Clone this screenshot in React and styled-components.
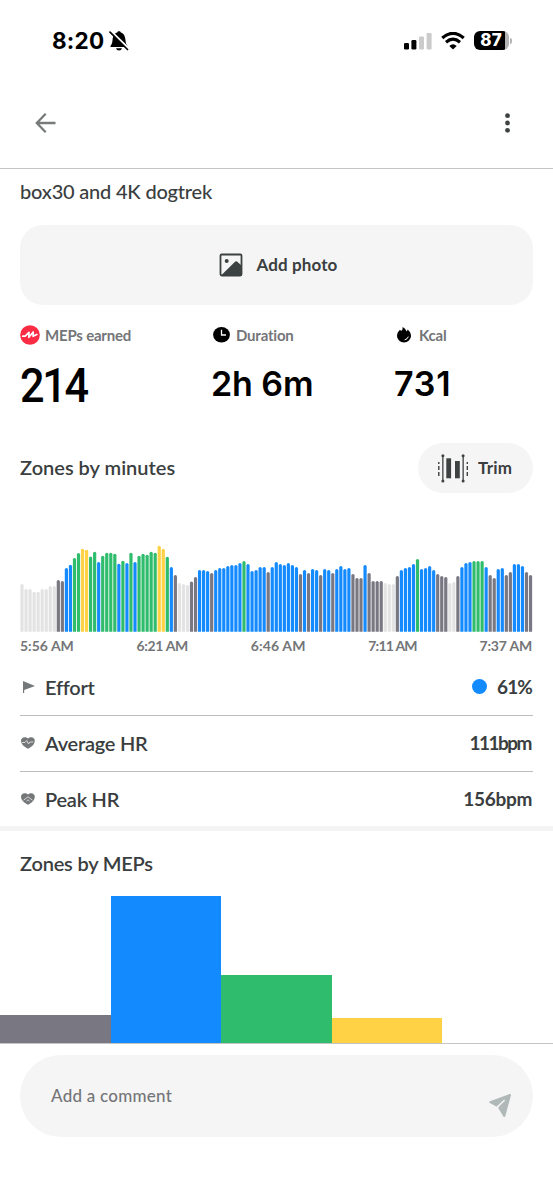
import styled, { createGlobalStyle } from 'styled-components';

const GlobalStyle = createGlobalStyle`
    * {
        box-sizing: border-box;
    }

    body {
        margin: 0;
        background: #fff;
        font-family: Lato, "Liberation Sans", sans-serif;
        color: #3a3e40;
    }
`;

const zoneColor = (z) => {
    switch(z) {
        case "e": return "#e3e3e3";
        case "g": return "#787782";
        case "b": return "#148aff";
        case "n": return "#2fbc6c";
        default: return "#ffd145";
    }
}

// one entry per minute: zone letter + bar height
const minutes = `e47.3 e42.3 e42.3 e39.7 e39.7 e42.3 e42.3 e45.3 e45.3 g51.3 g50.3 b63.3 b66.7 n73.3 n78.3 y82.7 y81.7 n75 n79.7 b69.3
n75.7 n78.7 n78.7 n77.7 b67.7 n70.7 b68.3 n78.7 b69.3 n75.7 n77.7 n76.7 n79.7 n78.7 y85.7 y82.7 n74.7 b64.3 g56.3 e48.3 e47.3 e46.3
g50 g54.3 b61.3 b61.3 b60.3 g58.3 b61.3 b63.3 b63.3 b65.3 b66.3 b66.3 b68.3 n70.3 b67.3 b60.3 b61.3 b64.3 b64.3 g59.3 b64.3 b69.3
b67.3 b66.3 b68.3 b66.3 b64.3 g57.3 b61.3 g58.3 b62.3 b61.3 g56.3 b62.3 b61.3 g58.3 b62.3 b65.3 b62.3 b63.3 g57.3 g53.3 g53.3 b66.3
g58.3 g50.3 g50.3 g50.3 e48.3 e47.3 e47.3 g55.3 b61.3 b63.3 b64.3 b67.3 n72.3 b62.3 b63.3 b65.3 b61.3 g57.3 g55.3 g54.3 e48.3 e49.3
g55.3 b64.3 b68.3 b69.3 n70.3 n70.3 n70.3 b64.3 g56.3 g53.3 b62.3 b63.3 g56.3 g59.3 b67.3 b67.3 b65.3 g59.3 g56.3`
    .split(/\s+/)
    .map(m => ({ zone: m[0], height: Number(m.slice(1)) }));

const meps = [
    { zone: "g", height: 28 },
    { zone: "b", height: 147 },
    { zone: "n", height: 68 },
    { zone: "y", height: 25 },
    { zone: "e", height: 0 }
];

const Screen = styled.div`
    width: 553px;
    height: 1200px;
    overflow: hidden;
    display: flex;
    flex-direction: column;
    background: #fff;
`;

const StatusBar = styled.header`
    height: 82px;
    padding: 0 41px 0 52px;
    display: flex;
    align-items: center;
    justify-content: space-between;
`;

const StatusGroup = styled.div`
    display: flex;
    align-items: center;
    gap: ${props => props.$gap};
`;

const Clock = styled.span`
    font: 700 22.5px/28px Inter, sans-serif;
    letter-spacing: 0.2px;
    color: #000;
`;

const Battery = styled.div`
    width: 35px;
    height: 19px;
    border-radius: 6px;
    padding-right: 1px;
    text-align: center;
    font: 800 17px/19px Inter, sans-serif;
    letter-spacing: 0;
    color: #fff;
    background: linear-gradient(90deg, #000 31px, #b5b5b5 31px);
`;

const BatteryTip = styled.div`
    width: 2px;
    height: 6px;
    margin-left: 1px;
    border-radius: 0 3px 3px 0;
    background: #b5b5b5;
`;

const BatteryGroup = styled(StatusGroup)`
    padding-bottom: 1px;
`;

const NavBar = styled.nav`
    height: 87px;
    padding: 0 36px 5px 35px;
    display: flex;
    align-items: center;
    justify-content: space-between;
    border-bottom: 1px solid #c4c4c4;
`;

const IconButton = styled.button`
    display: flex;
    padding: 0;
    border: 0;
    background: none;
`;

const Content = styled.main`
    padding: 0 20px;
    display: flex;
    flex-direction: column;
`;

const Title = styled.h1`
    margin: 9px 0 20px;
    font-size: 20px;
    font-weight: 500;
    line-height: 27px;
    letter-spacing: -0.2px;
    white-space: nowrap;
`;

const PhotoButton = styled.button`
    width: 513px;
    height: 80px;
    padding-left: 9px;
    display: flex;
    align-items: center;
    justify-content: center;
    gap: 14px;
    border: 0;
    border-radius: 23px;
    background: #f5f5f5;
    color: #3a3e40;
    font: 700 17px/22px Lato, sans-serif;
    letter-spacing: 0.1px;
`;

const Stats = styled.section`
    height: 138px;
    padding-top: 19px;
    display: grid;
    grid-template-columns: 191px 183px 139px;
`;

const StatLabel = styled.div`
    height: 21px;
    display: flex;
    align-items: center;
    gap: 5px;
    font-size: 15px;
    font-weight: 700;
    color: #747578;
    white-space: nowrap;
    letter-spacing: -0.2px;
`;

const StatValue = styled.div`
    height: 56px;
    margin-top: 12px;
    display: flex;
    align-items: center;
    color: #000;
    white-space: nowrap;
    padding-bottom: 3px;
    font: 600 34px Inter, sans-serif;
    letter-spacing: ${props => props.$spacing || "0"};
`;

const BigValue = styled(StatValue)`
    padding: 0;
    font: 500 48px Roboto, sans-serif;
    letter-spacing: -2.5px;
    transform: scaleX(0.9);
    transform-origin: left;
`;

const SectionHead = styled.div`
    height: 50px;
    width: 513px;
    display: flex;
    align-items: center;
    justify-content: space-between;
`;

const SectionTitle = styled.h2`
    margin: 0;
    padding-bottom: 2px;
    font-size: 20px;
    font-weight: 600;
    line-height: 26px;
    white-space: nowrap;
    letter-spacing: ${props => props.$spacing || "0"};
`;

const TrimButton = styled.button`
    width: 115px;
    height: 50px;
    padding: 0 0 0 19px;
    display: flex;
    align-items: center;
    gap: 9px;
    border: 0;
    border-radius: 25px;
    background: #f5f5f5;
    color: #3a3e40;
    font: 700 17px/22px Lato, sans-serif;
    letter-spacing: 0.2px;
`;

const MinutesChart = styled.svg`
    width: 513px;
    height: 92px;
    margin-top: 47px;
    display: block;
`;

const Axis = styled.div`
    width: 512px;
    height: 28px;
    padding-bottom: 2px;
    display: flex;
    align-items: center;
    justify-content: space-between;
    font-size: 14px;
    font-weight: 700;
    color: #747578;
`;

const Tick = styled.span`
    letter-spacing: ${props => props.$spacing};
`;

const Metric = styled.div`
    width: 513px;
    height: ${props => props.$last ? "54px" : "56px"};
    padding-bottom: ${props => props.$last ? "1px" : "2px"};
    display: flex;
    align-items: center;
    border-bottom: ${props => props.$last ? "0" : "1px solid #bdbdbd"};
`;

const MetricIcon = styled.span`
    width: 25px;
    padding-top: 1px;
    display: flex;
`;

const MetricName = styled.span`
    flex: 1;
    font-size: 20px;
    font-weight: 600;
    letter-spacing: -0.25px;
`;

const MetricValue = styled.span`
    display: flex;
    align-items: center;
    gap: 10px;
    padding-right: ${props => props.$inset || "1px"};
    font-size: 19px;
    font-weight: 700;
    letter-spacing: ${props => props.$spacing || "0"};
`;

const Dot = styled.i`
    width: 15px;
    height: 15px;
    border-radius: 50%;
    background: ${zoneColor("b")};
`;

const Band = styled.div`
    height: 5px;
    background: #f4f4f4;
`;

const MepsSection = styled.section`
    height: 65px;
    padding: 19px 20px 0;
`;

const MepsChart = styled.div`
    height: 148px;
    display: grid;
    grid-template-columns: repeat(5, 110.6px);
    align-items: end;
    border-bottom: 1px solid #c4c4c4;
`;

const MepsBar = styled.div`
    height: ${props => props.$height}px;
    background: ${props => zoneColor(props.$zone)};
`;

const CommentBox = styled.div`
    width: 513px;
    height: 82px;
    margin: 11px 20px 0;
    padding: 0 21px 1px 31px;
    display: flex;
    align-items: center;
    justify-content: space-between;
    border-radius: 41px;
    background: #f5f5f5;
    color: #747578;
    font-size: 17px;
    font-weight: 500;
    letter-spacing: 0.25px;
`;

const SendButton = styled(IconButton)`
    padding-top: 20px;
`;

const BellOff = () => (
    <svg width="20" height="22" viewBox="0 0 20 22">
        <path d="M1.5 16 C3 14 3.3 12.5 3.6 9.5 C4 5 6 3 8.2 2.4 C8.4 .8 11.6 .8 11.8 2.4 C14 3 16 5 16.4 9.5 C16.7 12.5 17 14 18.5 16 Q19 17 18 17 H2 Q1 17 1.500 16Z" />
        <path d="M7 18.200 H13 Q12.500 20.600 10 20.600 Q7.500 20.600 7 18.200Z" />
        <path d="M2.200 1.500 L20 19" stroke="#fff" strokeWidth="2.400" />
        <path d="M1 2.200 L18.500 19.500" stroke="#000" strokeWidth="1.700" strokeLinecap="round" />
    </svg>
);

const Signal = () => (
    <svg width="28" height="18" viewBox="0 0 28 18">
        <rect x="0" y="11" width="5" height="6.500" rx="1.300" />
        <rect x="7.400" y="8" width="5" height="9.500" rx="1.300" />
        <rect x="15" y="4.500" width="5" height="13" rx="1.300" fill="#cbcbcb" />
        <rect x="22.600" y="1" width="5" height="16.500" rx="1.300" fill="#cbcbcb" />
    </svg>
);

const Wifi = () => (
    <svg width="24" height="18" viewBox="0 0 24 18" fill="none" stroke="#000">
        <path d="M1.300 6 Q12 -3.200 22.700 6" strokeWidth="3.300" />
        <path d="M5 10.200 Q12 4.200 19 10.200" strokeWidth="3.100" />
        <path d="M8.300 14 Q12 10.600 15.700 14 L12 17.600Z" fill="#000" stroke="none" />
    </svg>
);

const Back = () => (
    <svg width="22" height="20" viewBox="0 0 22 20" fill="none" stroke="#777a7a" strokeWidth="2.300">
        <path d="M20.500 10 H2 M10.700 .8 L1.800 10 L10.700 19.200" />
    </svg>
);

const More = () => (
    <svg width="18" height="20" viewBox="0 0 18 20" fill="#3e4242">
        <circle cx="8.500" cy="2.700" r="2.400" />
        <circle cx="8.500" cy="10" r="2.400" />
        <circle cx="8.500" cy="17.300" r="2.400" />
    </svg>
);

const Picture = () => (
    <svg width="24" height="24" viewBox="0 0 24 24">
        <rect x="1.500" y="1.500" width="21" height="21" rx="1.200" fill="none" stroke="#3c4141" strokeWidth="1.800" />
        <circle cx="7.700" cy="8" r="2" fill="#3c4141" />
        <path d="M2 22.500 L16.300 8.500 Q17.200 8 18 8.500 L22.500 12.500 V22.500Z" fill="#3c4141" />
    </svg>
);

const MepsIcon = () => (
    <svg width="20" height="20" viewBox="0 0 20 20">
        <circle cx="10" cy="10" r="9.800" fill="#fb2c43" />
        <path d="M2.800 11.200 H5.200 L9 7.300 L8.900 12.300 L13.200 7 L13.100 11.300 L16.800 9.500" fill="none" stroke="#fff" strokeWidth="1.700" strokeLinejoin="round" strokeLinecap="round" />
    </svg>
);

const ClockIcon = () => (
    <svg width="20" height="20" viewBox="0 0 20 20">
        <ellipse cx="10.500" cy="9.800" rx="8.400" ry="7.700" />
        <path d="M10.500 4.800 V10 H15" fill="none" stroke="#fff" strokeWidth="1.300" />
    </svg>
);

const Flame = () => (
    <svg width="20" height="20" viewBox="0 0 20 20">
        <path d="M8.500 2 C11 3 12 5 12.400 6.200 C13.200 6 13.500 5.200 13.600 4.500 C15.500 5.800 17 8.400 17 11 A7 6.500 0 0 1 3 11 C3 8.500 4.500 6 6 4.800 C6.300 5.500 6.800 5.800 7.500 5.800 C8.500 5 8.800 3.500 8.500 2Z" />
        <path d="M14.200 12 Q13.500 14.300 11 14.800" fill="none" stroke="#fff" strokeWidth="1" strokeLinecap="round" />
    </svg>
);

const TrimIcon = () => (
    <svg width="32" height="30" viewBox="0 0 32 30" fill="#3e4242">
        <path d="M1.800 9 V25" stroke="#3e4242" strokeWidth="1.400" strokeDasharray="2 2 4 2 4 2" />
        <path d="M30.300 9 V25" stroke="#3e4242" strokeWidth="1.400" strokeDasharray="2 2 4 2 4 2" />
        <rect x="5.200" y="2" width="1.300" height="26" />
        <rect x="25.500" y="2" width="1.300" height="26" />
        <circle cx="5.900" cy="2.700" r="1.500" />
        <circle cx="5.900" cy="28" r="1.500" />
        <circle cx="26.100" cy="2.700" r="1.500" />
        <circle cx="26.100" cy="28" r="1.500" />
        <rect x="9.300" y="5.300" width="4.800" height="20" />
        <rect x="18" y="8" width="4.800" height="17.300" />
    </svg>
);

const Flag = () => (
    <svg width="16" height="14" viewBox="0 0 16 14" fill="#747878">
        <path d="M3 1 L15 5.900 L4.200 10 V13 H3Z" />
    </svg>
);

const Heart = ({ line }) => (
    <svg width="16" height="14" viewBox="0 0 16 14">
        <path d="M8 12.800 C4 10.500 1 8 1 4.700 C1 .8 5.700 .2 8 2.500 C10.300 .2 14.800 .8 14.800 4.700 C14.800 8 12 10.500 8 12.800Z" fill="#747878" />
        <path d={line} fill="none" stroke="#e4e4e4" strokeWidth="0.900" />
    </svg>
);

const Send = () => (
    <svg width="24" height="25" viewBox="0 0 24 25">
        <path d="M22 2 L2.300 9.200 L9.300 12.800 L16 8 L11.300 15 L16.300 23 Z" fill="#b1b8b8" stroke="#b1b8b8" strokeWidth="2" strokeLinejoin="round" />
        <path d="M8.800 14.500 L16.200 7.500" stroke="#f5f5f5" strokeWidth="1.500" strokeLinecap="round" />
    </svg>
);

const ZonesByMinutes = () => (
    <MinutesChart viewBox="0 0 513 92">
        {minutes.map((m, i) => (
            <path
                key={i}
                fill={zoneColor(m.zone)}
                d={`M${0.4 + i * 4.036} 91.700 v${1.2 - m.height} q0 -1.500 1.600 -1.500 t1.600 1.500 V91.700Z`}
            />
        ))}
    </MinutesChart>
);

export default function App() {
    return (
        <Screen>
            <GlobalStyle />
            <StatusBar>
                <StatusGroup $gap="5px">
                    <Clock>8:20</Clock>
                    <BellOff />
                </StatusGroup>
                <StatusGroup $gap="9px">
                    <Signal />
                    <Wifi />
                    <BatteryGroup $gap="0">
                        <Battery>87</Battery>
                        <BatteryTip />
                    </BatteryGroup>
                </StatusGroup>
            </StatusBar>
            <NavBar>
                <IconButton aria-label="Back"><Back /></IconButton>
                <IconButton aria-label="More"><More /></IconButton>
            </NavBar>
            <Content>
                <Title>box30 and 4K dogtrek</Title>
                <PhotoButton><Picture />Add photo</PhotoButton>
                <Stats>
                    <div>
                        <StatLabel><MepsIcon />MEPs earned</StatLabel>
                        <BigValue>214</BigValue>
                    </div>
                    <div>
                        <StatLabel><ClockIcon />Duration</StatLabel>
                        <StatValue $spacing="-0.1px">2h 6m</StatValue>
                    </div>
                    <div>
                        <StatLabel><Flame />Kcal</StatLabel>
                        <StatValue $spacing="0.8px">731</StatValue>
                    </div>
                </Stats>
                <SectionHead>
                    <SectionTitle>Zones by minutes</SectionTitle>
                    <TrimButton><TrimIcon />Trim</TrimButton>
                </SectionHead>
                <ZonesByMinutes />
                <Axis>
                    <Tick $spacing="0">5:56 AM</Tick>
                    <Tick $spacing="-0.35px">6:21 AM</Tick>
                    <Tick $spacing="0.15px">6:46 AM</Tick>
                    <Tick $spacing="-0.75px">7:11 AM</Tick>
                    <Tick $spacing="-0.2px">7:37 AM</Tick>
                </Axis>
                <Metric>
                    <MetricIcon><Flag /></MetricIcon>
                    <MetricName>Effort</MetricName>
                    <MetricValue $spacing="-0.9px"><Dot />61%</MetricValue>
                </Metric>
                <Metric>
                    <MetricIcon><Heart line="M2 6.500 H5 L6.700 4.500 L8.500 8 L10 6 H13.500" /></MetricIcon>
                    <MetricName>Average HR</MetricName>
                    <MetricValue $spacing="-1.5px" $inset="2px">111bpm</MetricValue>
                </Metric>
                <Metric $last>
                    <MetricIcon><Heart line="M3.500 8.200 L8 4.800 L12.500 8.200 M6.500 9 L8 7.800 L9.500 9" /></MetricIcon>
                    <MetricName>Peak HR</MetricName>
                    <MetricValue $spacing="-0.3px">156bpm</MetricValue>
                </Metric>
            </Content>
            <Band />
            <MepsSection>
                <SectionTitle $spacing="-0.2px">Zones by MEPs</SectionTitle>
            </MepsSection>
            <MepsChart>
                {meps.map(m => <MepsBar key={m.zone} $zone={m.zone} $height={m.height} />)}
            </MepsChart>
            <CommentBox>
                Add a comment
                <SendButton aria-label="Send"><Send /></SendButton>
            </CommentBox>
        </Screen>
    );
}
